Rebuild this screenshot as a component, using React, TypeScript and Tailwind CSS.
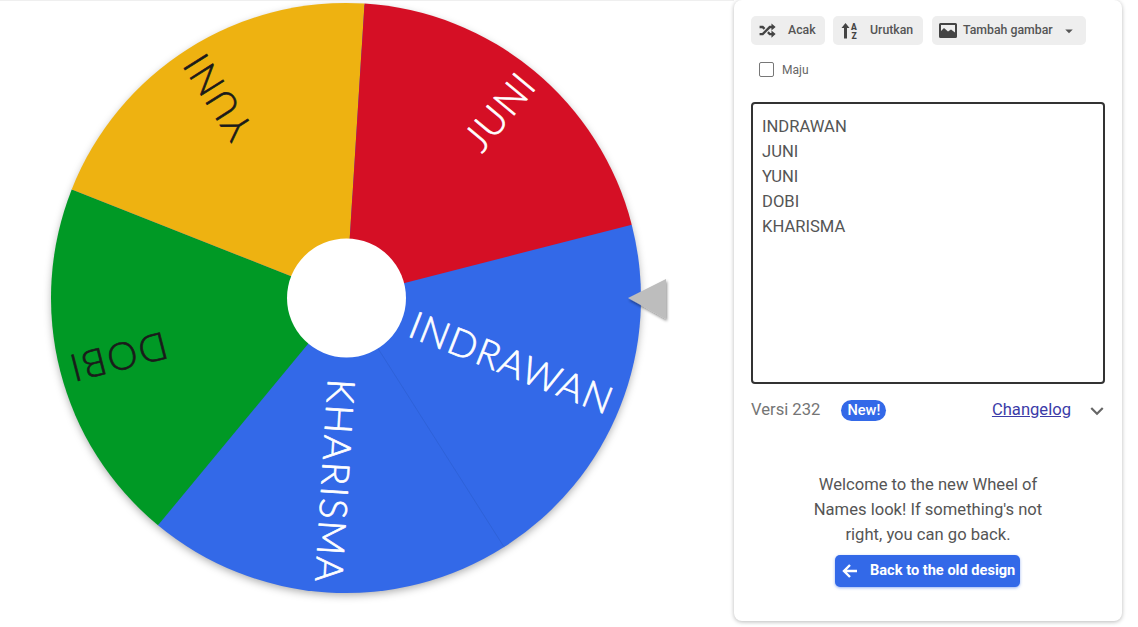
import React from "react";
import { MdArrowDropDown, MdKeyboardArrowDown } from "react-icons/md";

const CX = 346;
const CY = 297;
const R = 295;
const START = -14.4;

const slices = [
  { name: "INDRAWAN", fill: "#3369e8", text: "#ffffff", size: 38, ls: 1.4 },
  { name: "KHARISMA", fill: "#3369e8", text: "#ffffff", size: 38, ls: 1.8 },
  { name: "DOBI", fill: "#009925", text: "#1a1a1a", size: 38, ls: 2 },
  { name: "YUNI", fill: "#eeb211", text: "#1a1a1a", size: 38, ls: 1.4 },
  { name: "JUNI", fill: "#d50f25", text: "#ffffff", size: 38, ls: 1.6 },
];

function pt(angle: number, r: number) {
  const a = (angle * Math.PI) / 180;
  return [CX + r * Math.cos(a), CY + r * Math.sin(a)];
}

function Wheel() {
  return (
    <svg width="734" height="627" viewBox="0 0 734 627" className="block">
      <defs>
        <filter id="ws" x="-10%" y="-10%" width="120%" height="120%">
          <feDropShadow dx="0" dy="3" stdDeviation="4" floodColor="#000" floodOpacity="0.35" />
        </filter>
        <filter id="ps" x="-30%" y="-30%" width="160%" height="160%">
          <feDropShadow dx="1" dy="2" stdDeviation="1.5" floodColor="#000" floodOpacity="0.45" />
        </filter>
      </defs>
      <circle cx={CX} cy={CY} r={R - 1} fill="#3369e8" filter="url(#ws)" />
      {slices.map((s, i) => {
        const a0 = START + i * 72;
        const a1 = a0 + 72;
        const [x0, y0] = pt(a0, R);
        const [x1, y1] = pt(a1, R);
        return (
          <path
            key={s.name}
            d={`M${CX} ${CY}L${x0} ${y0}A${R} ${R} 0 0 1 ${x1} ${y1}Z`}
            fill={s.fill}
          />
        );
      })}
      <line x1={pt(57.6, 60)[0]} y1={pt(57.6, 60)[1]} x2={pt(57.6, R)[0]} y2={pt(57.6, R)[1]} stroke="#2f62d8" strokeWidth="1" />
      {slices.map((s, i) => {
        const mid = START + i * 72 + 36;
        return (
          <text
            key={s.name + "t"}
            transform={`translate(${CX} ${CY}) rotate(${mid})`}
            x={286}
            y={13}
            textAnchor="end"
            fontFamily="Lato, 'Open Sans', sans-serif"
            fontWeight={300}
            fontSize={s.size}
            letterSpacing={s.ls}
            fill={s.text}
            stroke={s.text}
            strokeWidth={0.7}
            strokeLinejoin="round"
          >
            {s.name}
          </text>
        );
      })}
      <circle cx={CX + 0.5} cy={CY} r={59.5} fill="#ffffff" />
      <polygon points="628,297 666,278 666,318" fill="#bdbdbd" filter="url(#ps)" />
    </svg>
  );
}

function ToolButton({ icon, label, className, children }: { icon: React.ReactNode; label: string; className: string; children?: React.ReactNode }) {
  return (
    <button className={`flex h-[29px] items-center rounded-[5px] bg-[#eeeeee] text-[12.3px] font-medium text-[#555555] ${className}`}>
      {icon}
      <span>{label}</span>
      {children}
    </button>
  );
}

export default function App() {
  return (
    <div className="flex h-[627px] w-[1138px] overflow-hidden bg-white font-['Roboto',sans-serif]">
      <div className="w-[734px] shrink-0 border-t border-[#efefef]">
        <Wheel />
      </div>
      <div className="mb-[6px] flex w-[388px] flex-col rounded-[8px] bg-white px-[17px] pt-[16px] shadow-[0_1px_4px_rgba(0,0,0,0.28)]">
        <div className="flex gap-[8px]">
          <ToolButton
            className="w-[74px] pl-[7px]"
            label="Acak"
            icon={
              <svg width="19" height="19" viewBox="0 0 24 24" className="mr-[11px] text-[#444444]" fill="currentColor">
                <path d="M17,3L22.25,7.5L17,12L22.25,16.5L17,21V18H14.26L11.44,15.18L13.56,13.06L15.5,15H17V12L17,9H15.5L6.5,18H2V15H5.26L14.26,6H17V3M2,6H6.5L9.32,8.82L7.2,10.94L5.26,9H2V6Z" />
              </svg>
            }
          />
          <ToolButton
            className="w-[90px] pl-[8px]"
            label="Urutkan"
            icon={
              <svg width="18" height="18" viewBox="0 0 18 18" className="mr-[11px] text-[#444444]" fill="currentColor">
                <path d="M4.5 1L8.5 6H6V16.5H3V6H0.5Z" />
                <text x="13" y="8" textAnchor="middle" fontSize="8.5" fontWeight="900" fontFamily="Roboto, sans-serif">A</text>
                <text x="13" y="16.5" textAnchor="middle" fontSize="8.5" fontWeight="900" fontFamily="Roboto, sans-serif">Z</text>
              </svg>
            }
          />
          <ToolButton
            className="ml-[1px] w-[154px] pl-[7px]"
            label="Tambah gambar"
            icon={
              <svg width="18" height="15" viewBox="0 0 18 15" className="mr-[6px] text-[#444444]" fill="currentColor">
                <path fillRule="evenodd" d="M1.5 0H16.5A1.5 1.5 0 0 1 18 1.5V13.5A1.5 1.5 0 0 1 16.5 15H1.5A1.5 1.5 0 0 1 0 13.5V1.5A1.5 1.5 0 0 1 1.5 0ZM2 2V8L5 5L9 8.5L12 6.5L16 9.5V2Z" />
              </svg>
            }
          >
            <MdArrowDropDown size={18} className="ml-[7px] text-[#555555]" />
          </ToolButton>
        </div>
        <label className="mt-[17px] flex h-[15px] items-center pl-[8px] text-[12px] text-[#666666]">
          <span className="mr-[8px] h-[15px] w-[15px] rounded-[2px] border-[1.5px] border-[#777777]" />
          Maju
        </label>
        <div className="mt-[25px] h-[282px] w-[354px] rounded-[4px] border-2 border-[#333333] px-[9px] py-[10px] text-[16.6px] leading-[25px] text-[#555555]">
          <div>INDRAWAN</div>
          <div>JUNI</div>
          <div>YUNI</div>
          <div>DOBI</div>
          <div>KHARISMA</div>
        </div>
        <div className="mt-[16px] flex h-[21px] items-center text-[16.6px]">
          <span className="text-[#757575]">Versi 232</span>
          <span className="ml-[21px] flex h-[21px] w-[45px] items-center justify-center rounded-full bg-[#3369e8] text-[14.6px] font-medium text-white">New!</span>
          <a className="ml-auto text-[#3b3ba8] underline">Changelog</a>
          <MdKeyboardArrowDown size={26} className="ml-[13px] mr-[-5px] text-[#666666]" />
        </div>
        <div className="mt-[51px] text-center text-[16.6px] leading-[25px] text-[#555555]">
          <div>Welcome to the new Wheel of</div>
          <div>Names look! If something's not</div>
          <div>right, you can go back.</div>
        </div>
        <button className="ml-[84px] mt-[8px] flex h-[32px] w-[185px] items-center rounded-[5px] bg-[#3369e8] pl-[7px] text-[14.6px] font-bold text-white shadow-[0_1px_3px_rgba(51,105,232,0.5)]">
          <svg width="16" height="16" viewBox="0 0 16 16" className="mr-[12px]" fill="none" stroke="currentColor" strokeWidth="2.4">
            <path d="M15 8H2M8 2L2 8L8 14" />
          </svg>
          Back to the old design
        </button>
      </div>
    </div>
  );
}
